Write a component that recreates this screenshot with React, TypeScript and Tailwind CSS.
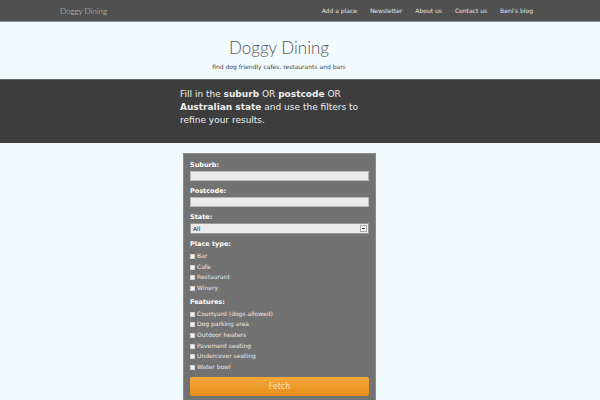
import React from "react";

const navLinks = ["Add a place", "Newsletter", "About us", "Contact us", "Beni's blog"];
const placeTypes = ["Bar", "Cafe", "Restaurant", "Winery"];
const features = [
  "Courtyard (dogs allowed)",
  "Dog parking area",
  "Outdoor heaters",
  "Pavement seating",
  "Undercover seating",
  "Water bowl",
];

const Check = ({ label }: { label: string }) => (
  <div className="flex items-center h-[10.7px]">
    <span className="mr-[2px] mt-[2px] h-[5px] w-[5px] bg-[#f4f4f4] border border-[#cfcfcf]" />
    <span className="text-[6px] text-[#e8e8e8]">{label}</span>
  </div>
);

export default function App() {
  return (
    <div className="min-h-[400px] w-[600px] bg-[#f2fbff] font-['DejaVu_Sans',sans-serif]">
      {/* top nav */}
      <nav className="h-[22px] bg-[#505050] border-b border-[#8c8c8c]">
        <div className="mx-auto flex h-full w-[480px] items-center justify-between">
          <span className="font-['Lato',sans-serif] text-[8px] font-light text-[#d0d0d0]">Doggy Dining</span>
          <ul className="flex gap-[13px] pr-[7px]">
            {navLinks.map((l) => (
              <li key={l} className="text-[6px] text-[#e6e6e6]">{l}</li>
            ))}
          </ul>
        </div>
      </nav>

      {/* title */}
      <header className="flex h-[57px] flex-col items-center pt-[14px] pr-[42px]">
        <h1 className="font-['Lato',sans-serif] text-[17px] font-light leading-[24px] text-[#555]">Doggy Dining</h1>
        <p className="mt-[2px] text-[6px] text-[#444]">find dog friendly cafes, restaurants and bars</p>
      </header>

      {/* intro band */}
      <section className="h-[64px] bg-[#3d3d3e] border-t border-[#6a6a6a]">
        <div className="mx-auto w-[480px] pl-[120px] pt-[8px]">
          <p className="w-[200px] text-[9px] leading-[13px] text-[#eeeeee]">
            Fill in the <b>suburb</b> OR <b>postcode</b> OR <b>Australian state</b> and use the filters to refine your results.
          </p>
        </div>
      </section>

      {/* form */}
      <div className="mx-auto w-[480px] pt-[10px]">
        <form className="ml-[123px] w-[193px] bg-[#727272] border border-[#8a8a8a] px-[6px] pt-[6px] pb-[8px]">
          <label className="block text-[6.5px] font-bold text-white leading-[10px]">Suburb:</label>
          <input className="mt-[1px] block h-[10px] w-full bg-[#ececec] border border-[#bbb]" />
          <label className="mt-[5px] block text-[6.5px] font-bold text-white leading-[10px]">Postcode:</label>
          <input className="mt-[1px] block h-[10px] w-full bg-[#ececec] border border-[#bbb]" />
          <label className="mt-[5px] block text-[6.5px] font-bold text-white leading-[10px]">State:</label>
          <div className="mt-[1px] flex h-[11px] w-full items-center justify-between bg-[#ececec] border border-[#999] pl-[2px] pr-[1px]">
            <span className="text-[6px] text-[#111]">All</span>
            <span className="flex h-[7px] w-[7px] items-center justify-center border border-[#aaa] bg-[#fafafa]">
              <span className="h-[1px] w-[3px] bg-[#333]" />
            </span>
          </div>

          <div className="mt-[5px] text-[6.5px] font-bold text-white leading-[10px]">Place type:</div>
          <div className="mt-[1px]">
            {placeTypes.map((p) => <Check key={p} label={p} />)}
          </div>

          <div className="mt-[4px] text-[6.5px] font-bold text-white leading-[10px]">Features:</div>
          <div className="mt-[1px]">
            {features.map((f) => <Check key={f} label={f} />)}
          </div>

          <button type="button" className="mt-0 h-[19px] w-full rounded-[2px] bg-gradient-to-b from-[#f5a93a] to-[#e58d1c] text-[8px] text-[#fbe3bd]">
            Fetch
          </button>
        </form>
      </div>
    </div>
  );
}
